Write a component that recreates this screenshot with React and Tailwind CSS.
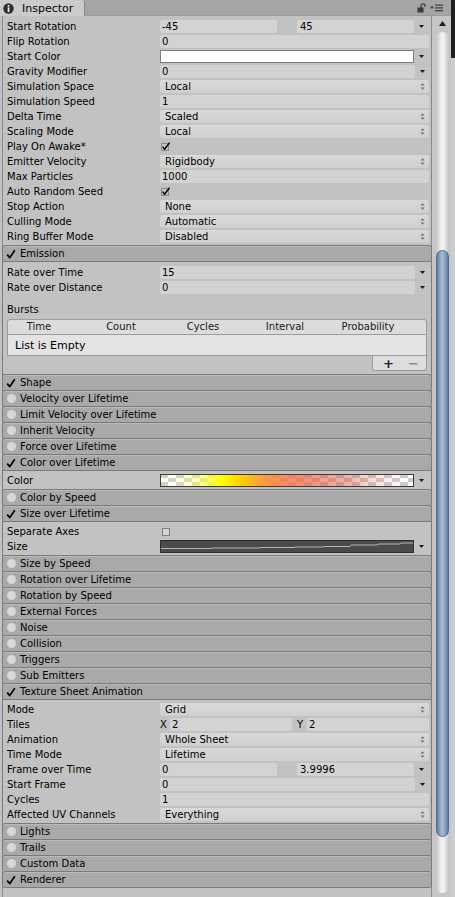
import React from "react";

const F = "font-['DejaVu_Sans',sans-serif]";

function DownArrow() {
  return (
    <svg width="5" height="3" viewBox="0 0 5 3">
      <polygon points="0,0 5,0 2.5,3" fill="#1a1a1a" />
    </svg>
  );
}

function PopArrows() {
  return (
    <svg width="5" height="7" viewBox="0 0 5 7">
      <polygon points="0.5,2.6 4.5,2.6 2.5,0.2" fill="#707070" />
      <polygon points="0.5,4.4 4.5,4.4 2.5,6.8" fill="#707070" />
    </svg>
  );
}

function ArrowCol() {
  return (
    <div className="w-[14px] h-[13px] flex items-center justify-center shrink-0">
      <DownArrow />
    </div>
  );
}

function Row({ label, children }) {
  return (
    <div className="h-[15px] flex items-center pl-[4px] pr-[2px]">
      <div className="w-[153px] shrink-0 text-[10px] leading-[15px] text-black whitespace-nowrap">{label}</div>
      <div className="flex-1 h-[13px] flex items-center min-w-0">{children}</div>
    </div>
  );
}

function Field({ text, arrow }) {
  return (
    <>
      <div className="flex-1 h-[13px] bg-[#d3d3d3] rounded-[2px] pl-[2px] text-[10px] leading-[13px] text-black">{text}</div>
      {arrow && <ArrowCol />}
    </>
  );
}

function TwoFields({ a, b }) {
  return (
    <>
      <div className="w-[117px] h-[13px] bg-[#d3d3d3] rounded-[2px] pl-[2px] text-[10px] leading-[13px]">{a}</div>
      <div className="w-[20px]" />
      <div className="w-[117px] h-[13px] bg-[#d3d3d3] rounded-[2px] pl-[3px] text-[10px] leading-[13px]">{b}</div>
      <ArrowCol />
    </>
  );
}

function Popup({ text }) {
  return (
    <div className="flex-1 h-[13px] bg-[linear-gradient(#d9d9d9,#cfcfcf)] rounded-[2px] pl-[5px] pr-[4px] flex items-center justify-between text-[10px] leading-[13px]">
      <span>{text}</span>
      <PopArrows />
    </div>
  );
}

function Toggle() {
  return (
    <svg width="10" height="9" viewBox="0 0 10 9" className="ml-[1px]">
      <rect x="0.5" y="1.5" width="7" height="7" fill="none" stroke="#8a8a8a" />
      <path d="M1.6 4.6 L3.6 7.2 L8.6 0.6" fill="none" stroke="#000" strokeWidth="1.5" />
    </svg>
  );
}

function EmptyBox() {
  return <div className="ml-[2px] w-[8px] h-[8px] border border-[#7c7c7c] bg-[#d5d5d5]" />;
}

function HeaderCheck() {
  return (
    <svg width="10" height="10" viewBox="0 0 10 10">
      <path d="M1.2 5.6 L3.8 8.6 L8.8 1.2" fill="none" stroke="#000" strokeWidth="1.7" strokeLinejoin="round" />
    </svg>
  );
}

function Header({ title, on, last, first }) {
  return (
    <div
      className={
        "-mx-px h-[16px] border-x border-t border-[#7b7b7b] bg-[#a9a9a9] shadow-[inset_0_1px_0_#bababa] flex items-center pl-[3px] rounded-[3px] " +
        (last ? "border-b h-[17px] " : "") +
        (first ? "mt-[1px] " : "")
      }
    >
      <div className="w-[10px] h-[10px] flex items-center justify-center">
        {on ? <HeaderCheck /> : <div className="w-[9px] h-[9px] rounded-full bg-[#d8d8d8]" />}
      </div>
      <span className="ml-[4px] text-[10px] leading-[15px] text-black">{title}</span>
    </div>
  );
}

function Body({ children, pt }) {
  return <div className={"-mx-px border-x border-t border-[#7b7b7b] pb-[1px] " + (pt || "pt-[2px]")}>{children}</div>;
}

function GradientField() {
  return (
    <>
      <svg width="254" height="13" viewBox="0 0 254 13" className="shrink-0">
        <defs>
          <pattern id="chk" width="16" height="8" patternUnits="userSpaceOnUse">
            <rect width="16" height="8" fill="#ffffff" />
            <rect x="0" y="0" width="8" height="4" fill="#c4c4c4" />
            <rect x="8" y="4" width="8" height="4" fill="#c4c4c4" />
          </pattern>
          <linearGradient id="grad" x1="0" y1="0" x2="1" y2="0">
            <stop offset="0" stopColor="#ffffe0" stopOpacity="0.15" />
            <stop offset="0.12" stopColor="#ffff90" stopOpacity="0.45" />
            <stop offset="0.24" stopColor="#ffff00" stopOpacity="1" />
            <stop offset="0.32" stopColor="#ffd000" stopOpacity="1" />
            <stop offset="0.42" stopColor="#ff9040" stopOpacity="0.95" />
            <stop offset="0.55" stopColor="#f07050" stopOpacity="0.8" />
            <stop offset="0.75" stopColor="#d87060" stopOpacity="0.5" />
            <stop offset="1" stopColor="#ffffff" stopOpacity="0.1" />
          </linearGradient>
        </defs>
        <rect x="0" y="0" width="254" height="13" fill="url(#chk)" />
        <rect x="0" y="0" width="254" height="13" fill="url(#grad)" />
        <rect x="0.5" y="0.5" width="253" height="12" fill="none" stroke="#3c3c3c" />
      </svg>
      <ArrowCol />
    </>
  );
}

function CurveField() {
  return (
    <>
      <svg width="254" height="13" viewBox="0 0 254 13" className="shrink-0">
        <rect x="0" y="0" width="254" height="13" fill="#4b4b4b" />
        <polyline
          points="1,8.5 51,8.5 52,8 99,8 100,7.5 134,7.5 135,7 163,7 164,6.5 190,6.5 191,5 217,5 218,4 240,4 241,3 253,3"
          fill="none"
          stroke="#b8b8b8"
          strokeWidth="1"
        />
        <rect x="0.5" y="0.5" width="253" height="12" fill="none" stroke="#2e2e2e" />
      </svg>
      <ArrowCol />
    </>
  );
}

function Lock() {
  return (
    <svg width="9" height="10" viewBox="0 0 9 10">
      <path d="M4 5 V2.8 A2 2 0 0 1 8 2.8 V4" fill="none" stroke="#3a3a3a" strokeWidth="1.2" />
      <rect x="0.5" y="4.5" width="6" height="5" fill="#3a3a3a" />
    </svg>
  );
}

function Menu() {
  return (
    <svg width="14" height="8" viewBox="0 0 14 8">
      <polygon points="0,2.5 4,2.5 2,5" fill="#3a3a3a" />
      <rect x="5" y="0.5" width="8" height="1.2" fill="#3a3a3a" />
      <rect x="5" y="3.3" width="8" height="1.2" fill="#3a3a3a" />
      <rect x="5" y="6.1" width="8" height="1.2" fill="#3a3a3a" />
    </svg>
  );
}

function InfoIcon() {
  return (
    <svg width="11" height="11" viewBox="0 0 11 11">
      <circle cx="5.5" cy="5.5" r="5.2" fill="#2d2d2d" />
      <rect x="4.7" y="2" width="1.7" height="1.6" fill="#f0f0f0" />
      <rect x="4.7" y="4.4" width="1.7" height="4.6" fill="#f0f0f0" />
    </svg>
  );
}

export default function App() {
  const sections1 = [
    ["Shape", true],
    ["Velocity over Lifetime", false],
    ["Limit Velocity over Lifetime", false],
    ["Inherit Velocity", false],
    ["Force over Lifetime", false],
  ];
  const sections2 = [
    ["Size by Speed", false],
    ["Rotation over Lifetime", false],
    ["Rotation by Speed", false],
    ["External Forces", false],
    ["Noise", false],
    ["Collision", false],
    ["Triggers", false],
    ["Sub Emitters", false],
  ];
  return (
    <div className={"w-[455px] h-[897px] overflow-hidden flex bg-[#c2c2c2] text-black " + F}>
      <div className="w-[451px] flex flex-col">
        {/* tab bar */}
        <div className="h-[16px] bg-[#a5a5a5] flex items-stretch border-b border-[#9a9a9a]">
          <div className="w-[85px] bg-[#cbcbcb] border-r border-[#8a8a8a] rounded-tr-[3px] flex items-center pl-[3px] -mb-px">
            <InfoIcon />
            <span className="ml-[8px] text-[11px] leading-[15px]">Inspector</span>
          </div>
          <div className="flex-1" />
          <div className="flex items-center pr-[7px] gap-[4px]">
            <Lock />
            <Menu />
          </div>
        </div>
        {/* body */}
        <div className="flex flex-1">
          <div className="w-[432px] pl-[2px]">
            <div className="w-[430px] border-x border-[#8a8a8a] h-full pt-[3px]">
              <Row label="Start Rotation"><TwoFields a="-45" b="45" /></Row>
              <Row label="Flip Rotation"><Field text="0" /></Row>
              <Row label="Start Color">
                <div className="w-[254px] h-[13px] border border-[#7d7d7d] bg-white" />
                <ArrowCol />
              </Row>
              <Row label="Gravity Modifier"><Field text="0" arrow /></Row>
              <Row label="Simulation Space"><Popup text="Local" /></Row>
              <Row label="Simulation Speed"><Field text="1" /></Row>
              <Row label="Delta Time"><Popup text="Scaled" /></Row>
              <Row label="Scaling Mode"><Popup text="Local" /></Row>
              <Row label="Play On Awake*"><Toggle /></Row>
              <Row label="Emitter Velocity"><Popup text="Rigidbody" /></Row>
              <Row label="Max Particles"><Field text="1000" /></Row>
              <Row label="Auto Random Seed"><Toggle /></Row>
              <Row label="Stop Action"><Popup text="None" /></Row>
              <Row label="Culling Mode"><Popup text="Automatic" /></Row>
              <Row label="Ring Buffer Mode"><Popup text="Disabled" /></Row>

              <Header title="Emission" on first />
              <Body pt="pt-[3px]">
                <Row label="Rate over Time"><Field text="15" arrow /></Row>
                <Row label="Rate over Distance"><Field text="0" arrow /></Row>
                <div className="mt-[7px] h-[15px] pl-[4px] text-[10px] leading-[15px]">Bursts</div>
                <div className="ml-[4px] w-[420px] mt-[2px]">
                  <div className="h-[16px] bg-[#dcdcdc] border border-[#9c9c9c] rounded-t-[3px] flex items-center text-[10px] leading-[14px] text-[#1a1a1a]">
                    <div className="w-[62px] text-center">Time</div>
                    <div className="w-[10px]" />
                    <div className="w-[82px] text-center">Count</div>
                    <div className="w-[82px] text-center">Cycles</div>
                    <div className="w-[82px] text-center">Interval</div>
                    <div className="w-[84px] text-center">Probability</div>
                  </div>
                  <div className="h-[21px] bg-[#e3e3e3] border-x border-b border-[#9c9c9c] pl-[7px] pt-[1px] text-[11px] leading-[20px]">List is Empty</div>
                  <div className="flex justify-end">
                    <div className="w-[55px] h-[15px] bg-[#dddddd] border-x border-b border-[#9c9c9c] rounded-b-[3px] flex items-center">
                      <span className="ml-[10px] text-[13px] leading-[13px] font-bold text-[#222]">+</span>
                      <span className="ml-[14px] text-[13px] leading-[13px] font-bold text-[#8a8a8a]">−</span>
                    </div>
                  </div>
                </div>
                <div className="h-[2px]" />
              </Body>

              {sections1.map(([t, on]) => (
                <Header key={t} title={t} on={on} />
              ))}
              <Header title="Color over Lifetime" on />
              <Body>
                <Row label="Color"><GradientField /></Row>
              </Body>
              <Header title="Color by Speed" on={false} />
              <Header title="Size over Lifetime" on />
              <Body>
                <Row label="Separate Axes"><EmptyBox /></Row>
                <Row label="Size"><CurveField /></Row>
              </Body>
              {sections2.map(([t, on]) => (
                <Header key={t} title={t} on={on} />
              ))}
              <Header title="Texture Sheet Animation" on />
              <Body>
                <Row label="Mode"><Popup text="Grid" /></Row>
                <Row label="Tiles">
                  <div className="w-[10px] text-[10px] leading-[13px]">X</div>
                  <div className="w-[122px] h-[13px] bg-[#d3d3d3] rounded-[2px] pl-[2px] text-[10px] leading-[13px]">2</div>
                  <div className="w-[5px]" />
                  <div className="w-[10px] text-[10px] leading-[13px]">Y</div>
                  <div className="flex-1 h-[13px] bg-[#d3d3d3] rounded-[2px] pl-[2px] text-[10px] leading-[13px]">2</div>
                </Row>
                <Row label="Animation"><Popup text="Whole Sheet" /></Row>
                <Row label="Time Mode"><Popup text="Lifetime" /></Row>
                <Row label="Frame over Time"><TwoFields a="0" b="3.9996" /></Row>
                <Row label="Start Frame"><Field text="0" arrow /></Row>
                <Row label="Cycles"><Field text="1" /></Row>
                <Row label="Affected UV Channels"><Popup text="Everything" /></Row>
              </Body>
              <Header title="Lights" on={false} />
              <Header title="Trails" on={false} />
              <Header title="Custom Data" on={false} />
              <Header title="Renderer" on last />
            </div>
          </div>
          {/* scrollbar */}
          <div className="w-[19px] bg-[#c6c6c6] flex flex-col">
            <div className="h-[15px] flex items-center justify-center pl-[1px]">
              <svg width="7" height="5" viewBox="0 0 7 5">
                <polygon points="0,5 7,5 3.5,0" fill="#1e1e1e" />
              </svg>
            </div>
            <div className="ml-[4px] w-[13px] mt-[1px] h-[861px] rounded-[7px] bg-[linear-gradient(90deg,#c4c4c4,#f4f4f4_45%,#f0f0f0_60%,#c4c4c4)] flex flex-col">
              <div className="h-[218px]" />
              <div className="h-[587px] rounded-[7px] border border-[#4f6b94] bg-[linear-gradient(90deg,#5f7ca6,#a9bcd6_45%,#9db1cd_60%,#5f7ca6)]" />
            </div>
          </div>
        </div>
      </div>
      <div className="w-[4px] flex flex-col">
        <div className="h-[58px] bg-[#1f1f1f]" />
        <div className="flex-1 bg-[#cdcdcd]" />
      </div>
    </div>
  );
}
